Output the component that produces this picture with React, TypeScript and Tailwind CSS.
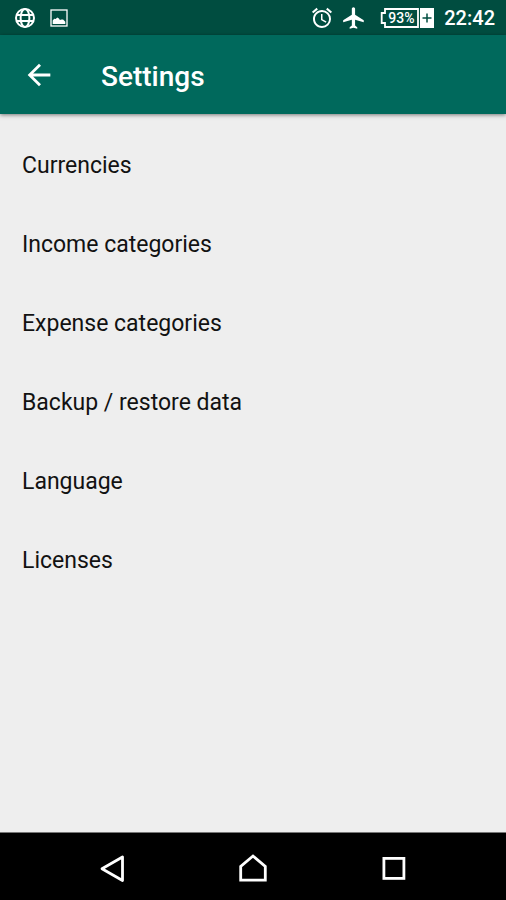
const items = [
  'Currencies',
  'Income categories',
  'Expense categories',
  'Backup / restore data',
  'Language',
  'Licenses',
];

function StatusBar() {
  return (
    <div className="flex h-[35px] items-center justify-between bg-[#004d40] pl-[13px] pr-[11px] text-white">
      <div className="flex items-center gap-[13px]">
        <svg className="size-6" viewBox="0 0 24 24" fill="none" stroke="currentColor" strokeWidth="2">
          <circle cx="12" cy="12" r="9" />
          <ellipse cx="12" cy="12" rx="4.4" ry="9" />
          <path d="M3.5 9h17M3.5 15h17" />
        </svg>
        <svg className="size-[18px]" viewBox="0 0 18 18" fill="none">
          <rect x="1" y="1" width="16" height="16" stroke="currentColor" strokeWidth="1.3" />
          <path
            d="M2.7 15v-3.6l1.5-1.7 1.4.4L7.3 8.5l1.6.9 1 1.7 1.7-.6 1.5.1 2.2 2.1V15z"
            fill="currentColor"
          />
        </svg>
      </div>
      <div className="flex items-center">
        <svg className="size-6" viewBox="0 0 24 24" fill="currentColor">
          <path d="M22 5.72l-4.6-3.86-1.29 1.53 4.6 3.86L22 5.72zM7.88 3.39L6.6 1.86 2 5.71l1.29 1.53 4.59-3.85zM12.5 8H11v6l4.75 2.85.75-1.23-4-2.37V8zM12 4c-4.97 0-9 4.03-9 9s4.02 9 9 9a9 9 0 0 0 0-18zm0 16c-3.87 0-7-3.13-7-7s3.13-7 7-7 7 3.13 7 7-3.13 7-7 7z" />
        </svg>
        <svg className="ml-[7px] size-[26px]" viewBox="0 0 24 24" fill="currentColor">
          <path d="M21 16v-2l-8-5V3.5c0-.83-.67-1.5-1.5-1.5S10 2.67 10 3.5V9l-8 5v2l8-2.5V19l-2 1.5V22l3.5-1 3.5 1v-1.5L13 19v-5.5l8 2.5z" />
        </svg>
        <div className="relative ml-[13px] h-5 w-[54px]">
          <svg className="size-full" viewBox="0 0 54 20" fill="none">
            <path d="M38 1H5v4H1.7v10H5v4h33z" stroke="currentColor" strokeWidth="1.8" />
            <path d="M40 0h14v20H40z" fill="currentColor" />
            <path d="M47 5.5v9M42.5 10h9" stroke="#004d40" strokeWidth="1.5" />
          </svg>
          <span className="absolute inset-y-0 left-2 text-[14px] font-medium leading-5">93%</span>
        </div>
        <span className="ml-2.5 text-[20px] font-medium leading-6">22:42</span>
      </div>
    </div>
  );
}

function AppBar() {
  return (
    <header className="relative flex h-[79px] items-center bg-[#00695c] pl-[22px] text-white shadow-[0_1px_4px_rgba(0,0,0,0.5)]">
      <button type="button" aria-label="Back">
        <svg className="size-[34px]" viewBox="0 0 24 24" fill="currentColor">
          <path d="M20 11H7.83l5.59-5.59L12 4l-8 8 8 8 1.41-1.41L7.83 13H20v-2z" />
        </svg>
      </button>
      <h1 className="ml-[45px] pt-1 text-[28px] font-medium leading-8">Settings</h1>
    </header>
  );
}

function NavBar() {
  return (
    <nav className="flex h-[68px] items-center justify-center gap-[101px] border-t border-[#777] bg-black pt-1 text-white">
      <button type="button" aria-label="Back">
        <svg className="size-10" viewBox="0 0 40 40" fill="none" stroke="currentColor" strokeWidth="2.8" strokeLinejoin="round">
          <path d="M30.5 8v23.5L10 19.7z" />
        </svg>
      </button>
      <button type="button" aria-label="Home">
        <svg className="size-10" viewBox="0 0 40 40" fill="none" stroke="currentColor" strokeWidth="2.8">
          <path d="M7.7 31.2V17.5L20 7l12.3 10.5v13.7z" />
        </svg>
      </button>
      <button type="button" aria-label="Recent apps">
        <svg className="size-10" viewBox="0 0 40 40" fill="none" stroke="currentColor" strokeWidth="2.8">
          <rect x="9.9" y="9.4" width="20" height="20" />
        </svg>
      </button>
    </nav>
  );
}

export default function App() {
  return (
    <div className="flex min-h-screen flex-col bg-[#eeeeee] font-['Roboto',sans-serif]">
      <StatusBar />
      <AppBar />
      <main className="flex-1 pt-3">
        <ul>
          {items.map(item => (
            <li key={item}>
              <button type="button" className="flex h-[79px] w-full items-center px-[22px] text-left text-[23px] leading-7 text-[#121212]">
                {item}
              </button>
            </li>
          ))}
        </ul>
      </main>
      <NavBar />
    </div>
  );
}
